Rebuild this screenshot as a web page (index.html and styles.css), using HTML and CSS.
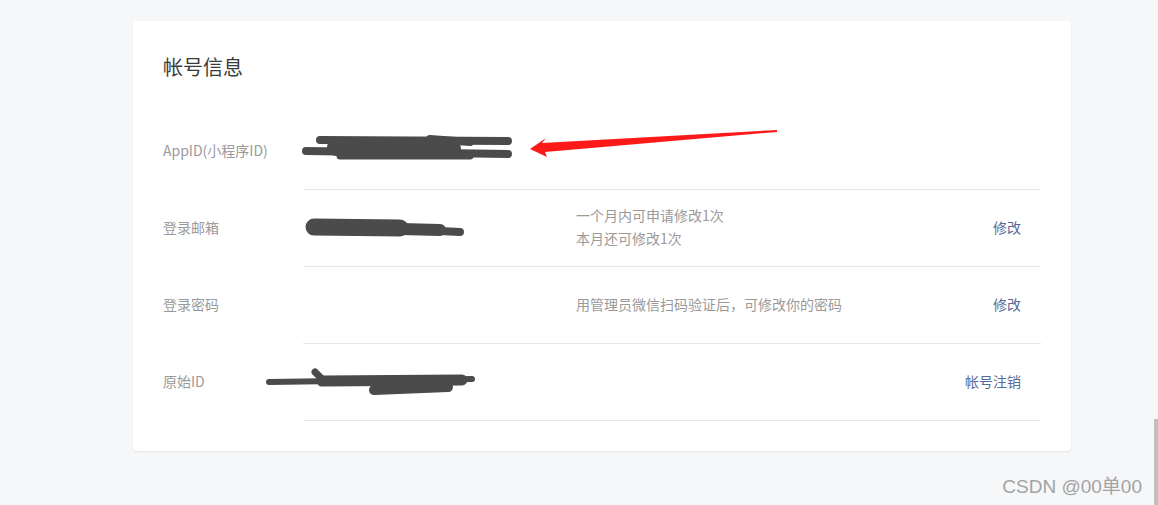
FILE: index.html
```html
<!DOCTYPE html>
<html lang="zh-CN">
<head>
    <meta charset="UTF-8">
    <meta name="viewport" content="width=device-width, initial-scale=1.0">
    <title>帐号信息</title>
    <link rel="stylesheet" href="styles.css">
</head>
<body>
    <div class="card">
        <h2 class="card-title">帐号信息</h2>

        <!-- AppID -->
        <div class="row">
            <div class="label">AppID(小程序ID)</div>
            <div class="content">
                <div class="value"></div>
                <div class="desc"></div>
                <div class="action"></div>
            </div>
        </div>

        <!-- 登录邮箱 -->
        <div class="row">
            <div class="label">登录邮箱</div>
            <div class="content">
                <div class="value"></div>
                <div class="desc">
                    <p>一个月内可申请修改1次</p>
                    <p>本月还可修改1次</p>
                </div>
                <div class="action"><a href="#">修改</a></div>
            </div>
        </div>

        <!-- 登录密码 -->
        <div class="row">
            <div class="label">登录密码</div>
            <div class="content">
                <div class="value"></div>
                <div class="desc"><p>用管理员微信扫码验证后，可修改你的密码</p></div>
                <div class="action"><a href="#">修改</a></div>
            </div>
        </div>

        <!-- 原始ID -->
        <div class="row">
            <div class="label">原始ID</div>
            <div class="content">
                <div class="value"></div>
                <div class="desc"></div>
                <div class="action"><a href="#">帐号注销</a></div>
            </div>
        </div>
    </div>

    <!-- redaction scribbles and arrow drawn over the screenshot -->
    <svg class="marks" width="1158" height="505" viewBox="0 0 1158 505">
        <g fill="none" stroke="#4b4b4b" stroke-linecap="round" stroke-linejoin="round">
            <!-- AppID -->
            <path d="M320 140 L508 141" stroke-width="8"/>
            <path d="M306 151 L508 154" stroke-width="8"/>
            <path d="M336 147 L452 149" stroke-width="18"/>
            <path d="M340 156 L470 156" stroke-width="7"/>
            <path d="M430 139 L470 142" stroke-width="8"/>
            <!-- email -->
            <path d="M314 227 L400 228" stroke-width="17"/>
            <path d="M400 229 L440 230" stroke-width="12"/>
            <path d="M440 231 L460 232" stroke-width="8"/>
            <!-- original id -->
            <path d="M269 382 L472 379" stroke-width="6"/>
            <path d="M315 372 L322 379" stroke-width="7"/>
            <path d="M322 381 L462 380" stroke-width="11"/>
            <path d="M374 390 L448 387" stroke-width="10"/>
        </g>
        <polygon fill="#ff1a1a" points="530,149 546,138 542,143 777,130 777,132 545,152 547,157"/>
    </svg>

    <div class="scrollbar"></div>
    <div class="watermark">CSDN @00单00</div>
</body>
</html>
```

FILE: styles.css
```css
body {
    margin: 0;
    background-color: #f6f7f9;
    font-family: "Noto Sans CJK SC", "Microsoft YaHei", sans-serif;
    font-size: 14px;
    height: 505px;
    overflow: hidden;
    position: relative;
}

.card {
    width: 878px;
    margin: 21px 0 0 133px;
    padding: 32px 30px 30px 30px;
    background: #fff;
    border-radius: 4px;
    box-shadow: 0 1px 2px rgba(0, 0, 0, 0.08);
}

.card-title {
    margin: 0 0 32px 0;
    font-size: 20px;
    line-height: 28px;
    font-weight: normal;
    color: #3a3a3a;
}

.row {
    display: flex;
    height: 77px;
}

.label {
    width: 140px;
    flex-shrink: 0;
    display: flex;
    align-items: center;
    padding-bottom: 3px;
    color: #9a9a9a;
}

.content {
    flex: 1;
    display: flex;
    align-items: center;
    padding-bottom: 2px;
    border-bottom: 1px solid #e7e7e7;
}

.value {
    width: 273px;
    flex-shrink: 0;
}

.desc {
    flex: 1;
    color: #9a9a9a;
    line-height: 23px;
}

.desc p {
    margin: 0;
}

.action {
    padding-right: 20px;
}

.action a {
    color: #576b95;
    text-decoration: none;
}

.marks {
    position: absolute;
    left: 0;
    top: 0;
    pointer-events: none;
}

.scrollbar {
    position: absolute;
    right: 0;
    top: 419px;
    bottom: 0;
    width: 4px;
    background: #bfbfbf;
}

.watermark {
    position: absolute;
    right: 16px;
    bottom: 7px;
    font-family: "Liberation Sans", "Noto Sans CJK SC", sans-serif;
    font-size: 19px;
    color: #a3a3a3;
}
```
